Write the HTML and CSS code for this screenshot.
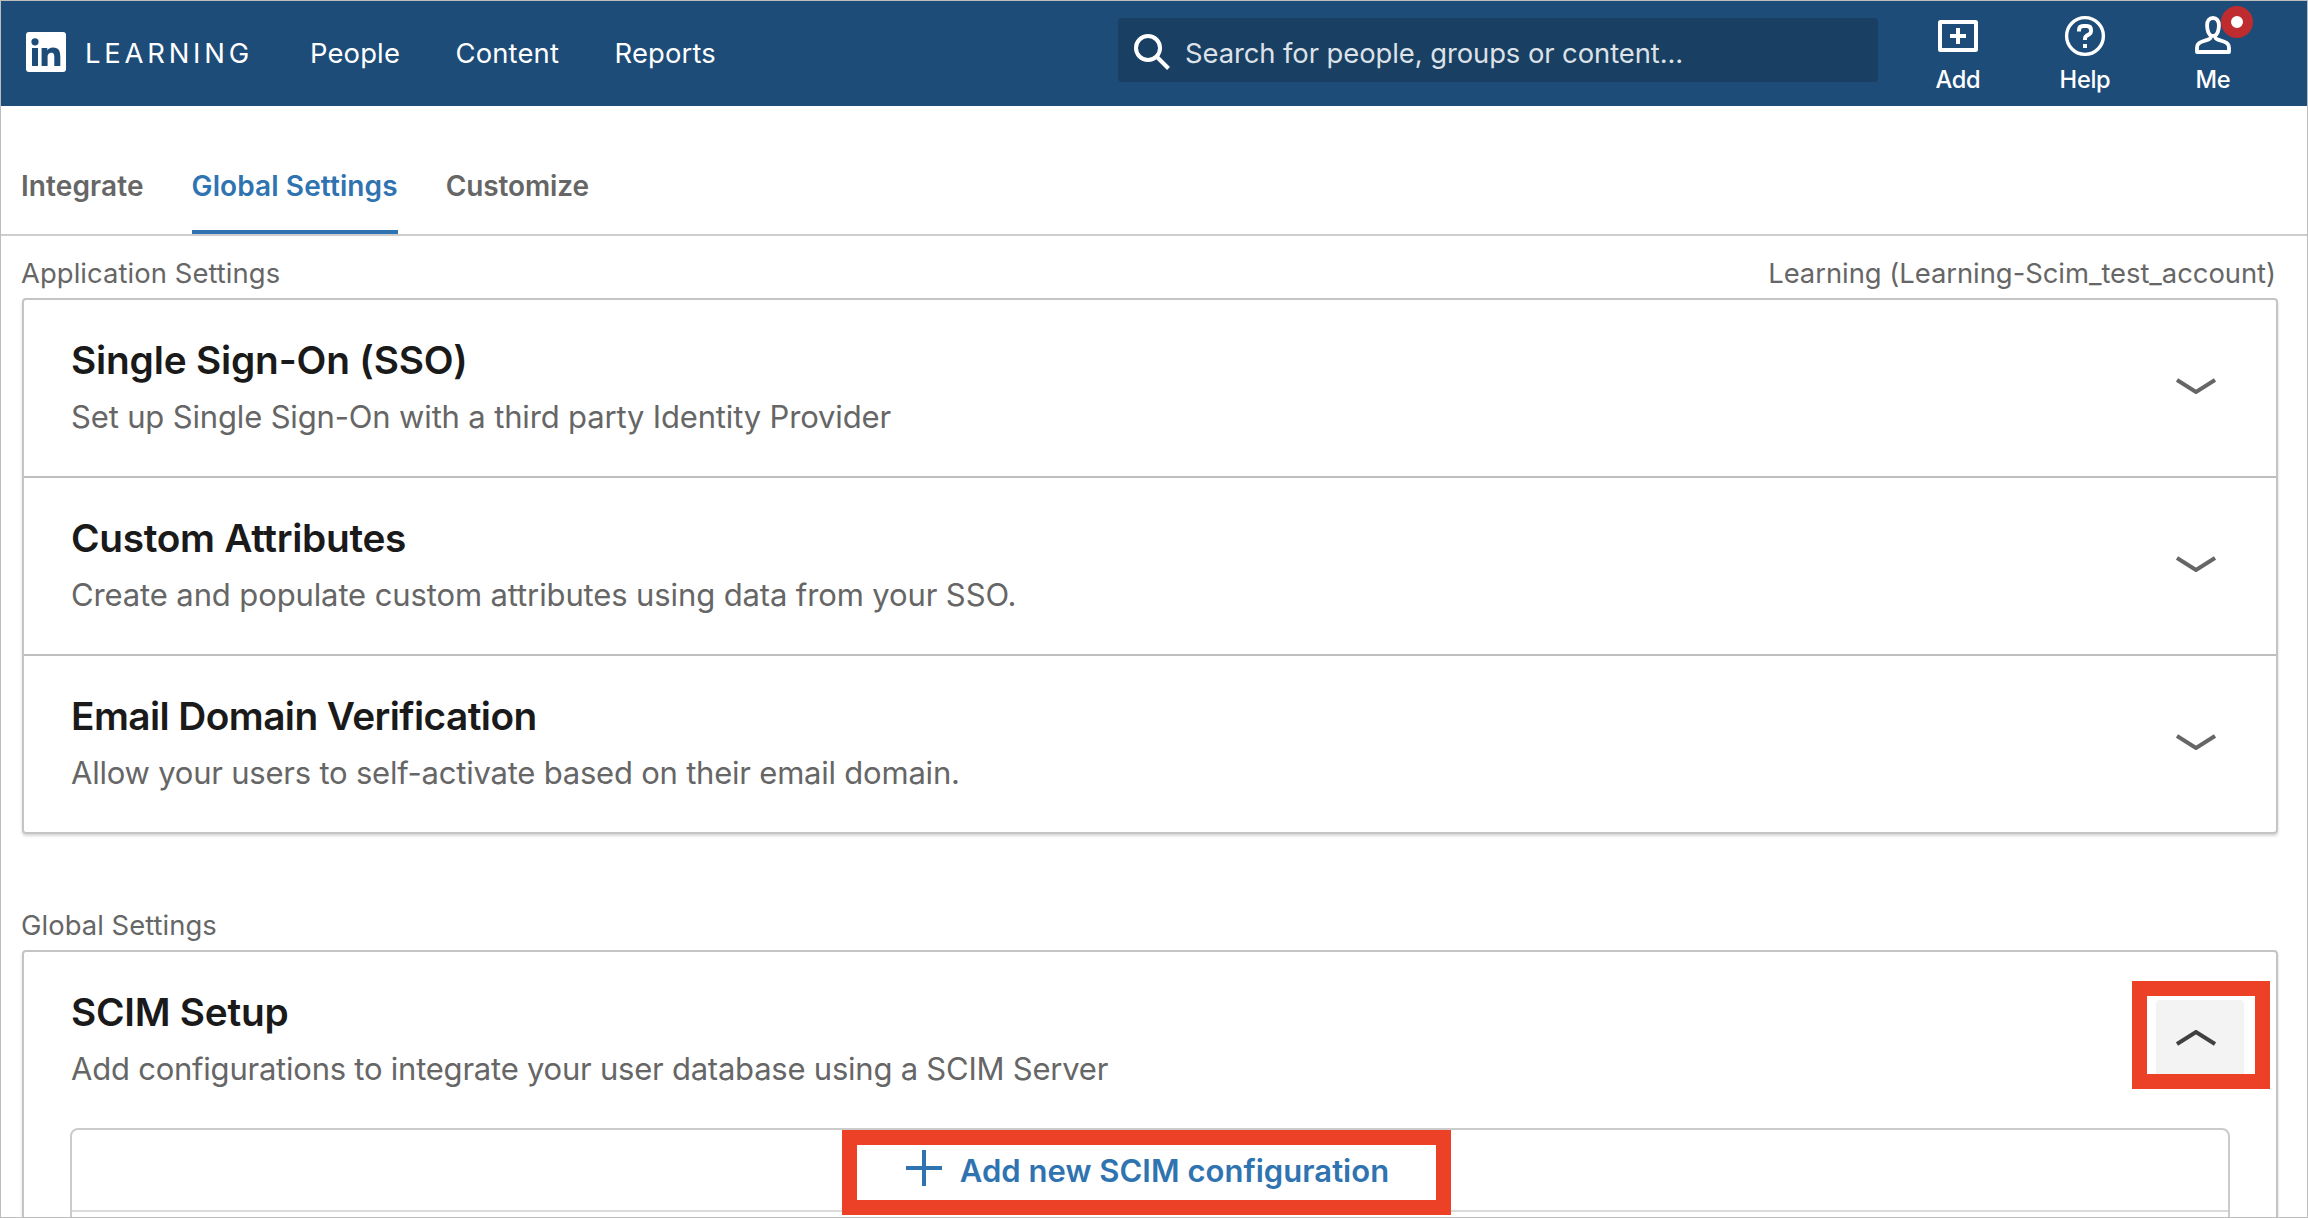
FILE: index.html
```
<!DOCTYPE html>
<html lang="en">
<head>
<meta charset="utf-8">
<title>Global Settings</title>
<link rel="stylesheet" href="styles.css">
</head>
<body>
<header class="header">
  <svg class="logo" viewBox="0 0 40 40"><rect width="40" height="40" rx="3" fill="#fff"/><circle cx="9" cy="9.8" r="3.6" fill="#1d4c78"/><path fill="#1d4c78" d="M6 16h6v18H6zM15.6 16h5.7v2.4c.8-1.5 2.8-2.9 5.7-2.9 6 0 7.3 3.9 7.3 9.1V34h-6v-8.6c0-2.1 0-4.7-2.9-4.7s-3.8 2.2-3.8 4.6V34h-6z"/></svg>
  <span class="brand">LEARNING</span>
  <nav class="nav"><a>People</a><a>Content</a><a>Reports</a></nav>
  <div class="search">
    <svg class="search-icon" viewBox="0 0 36 36" fill="none" stroke="#fff" stroke-width="4"><circle cx="14" cy="14" r="12"/><path d="M22.5 22.5L34.5 34.5"/></svg>
    <span class="search-text">Search for people, groups or content...</span>
  </div>
  <div class="actions">
    <a class="action"><svg class="action-icon" viewBox="0 0 48 48" fill="none" stroke="#fff" stroke-width="4"><rect x="6" y="10" width="36" height="28" rx="0.5"/><path d="M24 16v16M16 24h16"/></svg><span>Add</span></a>
    <a class="action"><svg class="action-icon" viewBox="0 0 48 48" fill="none" stroke="#fff" stroke-width="4"><circle cx="24" cy="24" r="18.4" stroke-width="3.4"/><path d="M18 19.5v-1.3q0-4.2 4.2-4.2h3.6q4.2 0 4.2 4.2v1q0 2-1.8 3l-2.6 1.6q-1.6 1-1.6 2.6V28M24 32v4"/></svg><span>Help</span></a>
    <a class="action"><svg class="action-icon" viewBox="0 0 48 48" fill="none" stroke="#fff" stroke-width="3.8" stroke-linejoin="round"><path d="M24 6c-3.800 0-5.900 3-5.900 7.200 0 5 2.100 9.300 4.200 10.600h3.400c2.100-1.300 4.200-5.600 4.200-10.600 0-4.200-2.100-7.200-5.900-7.200z"/><path d="M22 25c-.4 1.500-1.500 2.100-3 2.600l-6.300 2.100c-2.900 1-4.700 2.800-4.700 6V40h32v-4.300c0-3.200-1.800-5-4.700-6L29 27.600c-1.500-.5-2.600-1.100-3-2.600"/></svg><i class="badge"></i><span>Me</span></a>
  </div>
</header>

<nav class="tabs"><a class="tab">Integrate</a><a class="tab active">Global Settings</a><a class="tab">Customize</a></nav>

<main class="main">
  <div class="label"><span class="label-app">Application Settings</span><span class="label-account">Learning (Learning-Scim_test_account)</span></div>
  <section class="card">
    <div class="row">
      <div><h2 class="title sso">Single Sign-On (SSO)</h2><p class="desc">Set up Single Sign-On with a third party Identity Provider</p></div>
      <button class="toggle"><svg class="chevron" viewBox="0 0 40 16"><path d="M1 2L20 14 39 2"/></svg></button>
    </div>
    <div class="row">
      <div><h2 class="title attributes">Custom Attributes</h2><p class="desc create">Create and populate custom attributes using data from your SSO.</p></div>
      <button class="toggle"><svg class="chevron" viewBox="0 0 40 16"><path d="M1 2L20 14 39 2"/></svg></button>
    </div>
    <div class="row">
      <div><h2 class="title email">Email Domain Verification</h2><p class="desc allow">Allow your users to self-activate based on their email domain.</p></div>
      <button class="toggle"><svg class="chevron" viewBox="0 0 40 16"><path d="M1 2L20 14 39 2"/></svg></button>
    </div>
  </section>

  <div class="label second"><span class="label-global">Global Settings</span></div>
  <section class="card open">
    <div class="row">
      <div><h2 class="title scim">SCIM Setup</h2><p class="desc configs">Add configurations to integrate your user database using a SCIM Server</p></div>
      <button class="toggle expanded"><svg class="chevron" viewBox="0 0 40 16"><path d="M1 14L20 2 39 14"/></svg></button>
    </div>
    <div class="configs-box">
      <button class="add-config"><svg class="plus" viewBox="0 0 36 36"><path d="M18 0v36M0 18h36"/></svg><span>Add new SCIM configuration</span></button>
    </div>
  </section>
</main>
<div class="callout callout-toggle"></div>
<div class="callout callout-add"></div>
</body>
</html>
```
FILE: styles.css
```
* { box-sizing: border-box; }

body {
  position: relative;
  margin: 0;
  height: 1218px;
  overflow: hidden;
  display: flex;
  flex-direction: column;
  border: 1px solid #bdbdbd;
  background: #fff;
  color: #666;
  font: 400 27.4px/36px "Inter", "Liberation Sans", sans-serif;
}

h2, p { margin: 0; }
button { border: 0; background: none; padding: 0; font: inherit; }
svg { display: block; flex: none; }

/* Header */
.header {
  flex: none;
  display: flex;
  align-items: center;
  height: 105px;
  padding: 0 29px 3px 25px;
  background: #1d4c78;
  color: #fff;
}
.logo { width: 40px; height: 40px; }
.brand { margin: 2px 0 0 19px; width: 225px; letter-spacing: 3.8px; }
.nav { display: flex; gap: 55.5px; margin-top: 2px; letter-spacing: 0.15px; }
.search {
  align-self: flex-start;
  display: flex;
  align-items: center;
  width: 760px;
  height: 64px;
  margin: 17px 16px 0 auto;
  padding: 0 16px;
  border-radius: 4px;
  background: #193f63;
}
.search-icon { width: 36px; height: 36px; margin-top: 4px; }
.search-text { margin: 6px 0 0 15px; color: #dce2e8; letter-spacing: -0.07px; }
.actions { align-self: flex-start; display: flex; padding-top: 11px; }
.action {
  position: relative;
  display: flex;
  flex-direction: column;
  align-items: center;
  gap: 6px;
  width: 128px;
  font-size: 23.6px;
  font-weight: 500;
  line-height: 28px;
  letter-spacing: -0.3px;
}
.action:nth-child(2) { width: 126px; }
.action:nth-child(3) { width: 130px; }
.action-icon { width: 48px; height: 48px; }
.badge {
  position: absolute;
  left: 73px;
  top: -6px;
  width: 32px;
  height: 32px;
  border: 10px solid #bf2c2f;
  border-radius: 50%;
  background: #fff;
}

/* Tabs */
.tabs {
  flex: none;
  display: flex;
  gap: 48px;
  height: 130px;
  padding: 62px 0 0 20px;
  border-bottom: 2px solid #cdcdd0;
}
.tab {
  height: 66px;
  border-bottom: 4px solid transparent;
  font-size: 28px;
  font-weight: 600;
  letter-spacing: 0.1px;
}
.tab:last-child { letter-spacing: -0.1px; }
.tab.active { border-color: #2f74b0; color: #2f74b0; }

/* Sections */
.main { padding: 19px 29px 0 21px; }
.label { display: flex; justify-content: space-between; margin: 0 2px 7px -1px; }
.label.second { margin-top: 73px; }
.label-app { letter-spacing: 0.07px; }
.label-account { letter-spacing: -0.03px; }
.label-global { letter-spacing: 0.05px; }

.card {
  border: 2px solid #c4c4c4;
  border-radius: 4px;
  box-shadow: 0 2px 3px rgba(0, 0, 0, 0.16);
}
.card.open { height: 300px; }
.row {
  display: flex;
  justify-content: space-between;
  align-items: center;
  height: 178px;
  padding: 0 32px 0 47px;
  border-bottom: 2px solid #bebebe;
}
.row:last-child, .open .row { height: 176px; border-bottom: 0; }
.title {
  margin-bottom: 13px;
  color: #1a1a1a;
  font-size: 38.8px;
  font-weight: 600;
  line-height: 48px;
}
.sso { letter-spacing: -0.18px; }
.attributes { letter-spacing: -0.3px; }
.email { letter-spacing: -0.58px; }
.scim { letter-spacing: -0.25px; }
.desc { padding-bottom: 3px; font-size: 31px; line-height: 40px; letter-spacing: -0.16px; }
.create { letter-spacing: -0.12px; }
.allow { letter-spacing: -0.22px; }
.configs { letter-spacing: -0.23px; }

.toggle {
  display: flex;
  align-items: center;
  justify-content: center;
  width: 88px;
  height: 80px;
  padding: 0 8px 4px 0;
  border-radius: 4px;
}
.toggle.expanded { background: #f3f3f3; }
.chevron { width: 40px; height: 16px; fill: none; stroke: #666; stroke-width: 4; }
.expanded .chevron { stroke: #404040; }

.configs-box {
  height: 140px;
  margin: 0 46px;
  border: 2px solid #cbcbcb;
  border-radius: 8px;
}
.add-config {
  display: flex;
  align-items: center;
  justify-content: center;
  gap: 18px;
  width: 100%;
  height: 82px;
  padding-right: 5px;
  border-bottom: 2px solid #dadada;
  color: #2f74b0;
  font-size: 31px;
  font-weight: 600;
  letter-spacing: 0.03px;
}
.add-config span { margin-top: 2px; }
.plus { width: 36px; height: 36px; margin-bottom: 4px; stroke: #2f74b0; stroke-width: 4; }

/* Highlight frames lying over the page */
.callout { position: absolute; border: 15px solid #ec4126; }
.callout-toggle { left: 2131px; top: 980px; width: 138px; height: 108px; }
.callout-add { left: 841px; top: 1129px; width: 609px; height: 85px; }
```
